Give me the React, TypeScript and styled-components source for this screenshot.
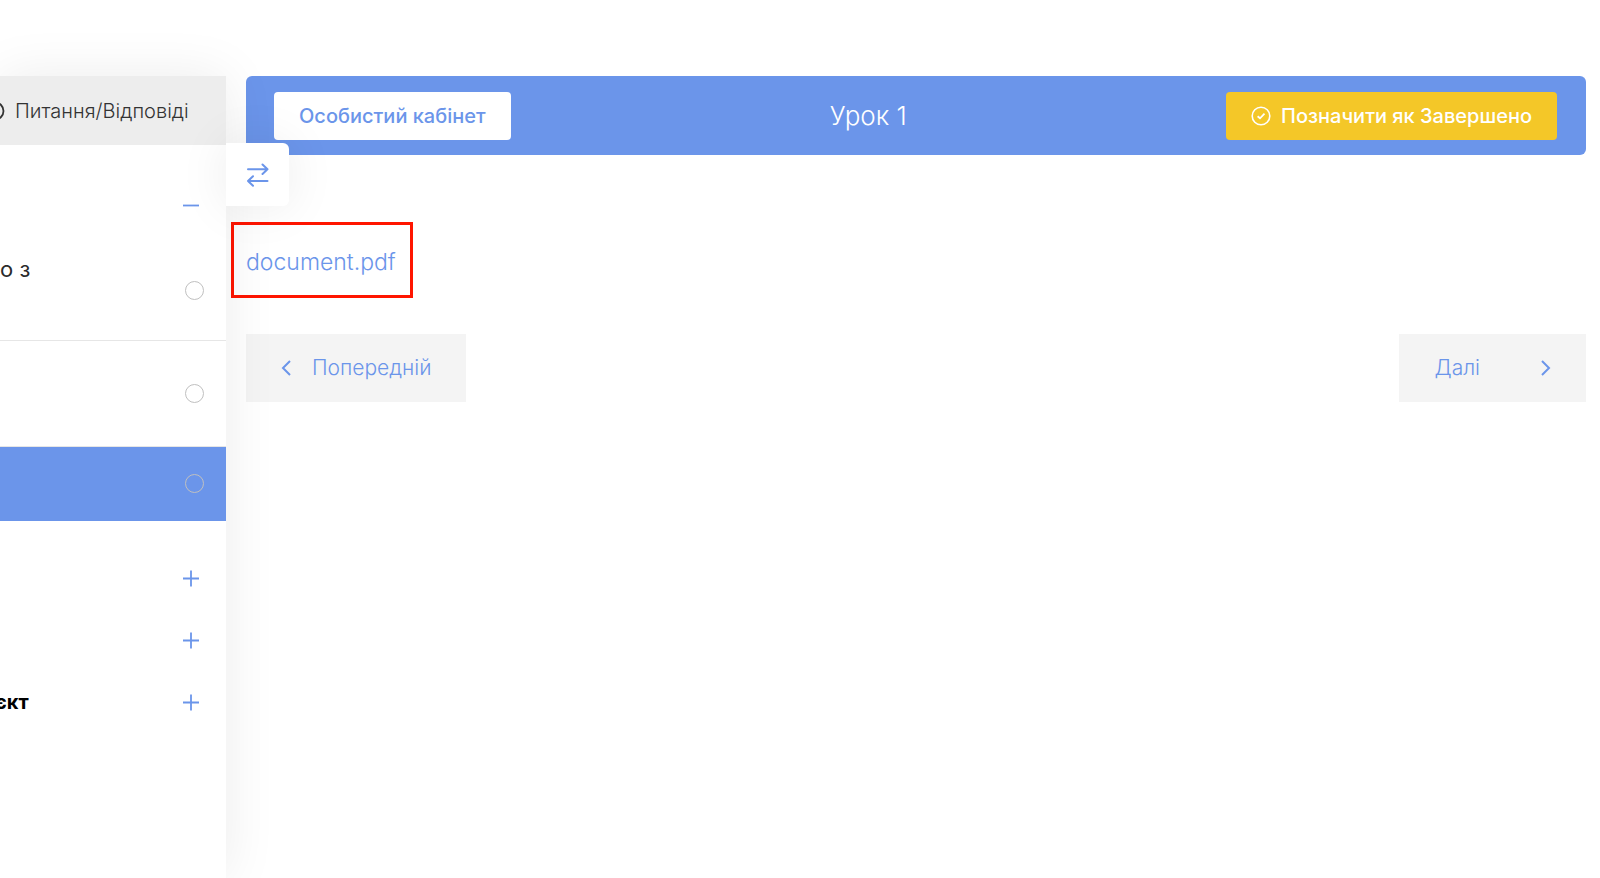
import React from "react";
import styled, { createGlobalStyle } from "styled-components";

const blue = "#6b95ea";

const GlobalStyle = createGlobalStyle`
  *, *::before, *::after { box-sizing: border-box; }
  body {
    margin: 0;
    background: #fff;
    color: #2b2b2b;
    font-family: Inter, "Noto Sans", "Liberation Sans", sans-serif;
    overflow-x: hidden;
  }
  button { font-family: inherit; border: 0; cursor: pointer; }
`;

const Page = styled.div`
  display: flex;
  align-items: stretch;
  min-height: 100vh;
  padding-top: 76px;
  overflow: hidden;
`;

const Sidebar = styled.aside`
  position: relative;
  z-index: 1;
  flex: 0 0 226px;
  background: #fff;
  box-shadow: 0 0 50px rgba(0, 0, 0, 0.08);
`;

const SidebarTab = styled.button`
  display: flex;
  align-items: center;
  gap: 10px;
  width: 100%;
  height: 69px;
  padding: 0 0 0 4px;
  background: #ededed;
  color: #333;
  font-size: 20px;
  font-weight: 300;
  line-height: 24px;
  white-space: nowrap;

  svg { flex: none; margin-left: -19px; }
`;

const SectionHead = styled.div<{ $open?: boolean }>`
  display: flex;
  align-items: center;
  justify-content: space-between;
  height: ${(p) => (p.$open ? 96 : 62)}px;
  padding: ${(p) => (p.$open ? "24px 25px 0 0" : "0 25px 0 0")};
`;

const SectionTitle = styled.h3`
  margin: 0 auto 0 -5px;
  color: #000;
  font-size: 20px;
  font-weight: 700;
  line-height: 24px;
`;

const FoldButton = styled.button`
  display: flex;
  margin-left: auto;
  padding: 0;
  background: none;
  color: ${blue};
`;

const LessonRow = styled.div<{ $height: number; $active?: boolean }>`
  display: flex;
  align-items: center;
  height: ${(p) => p.$height}px;
  padding-right: 22px;
  border-bottom: 1px solid ${(p) => (p.$active ? blue : "#e6e6e6")};
  background: ${(p) => (p.$active ? blue : "#fff")};
`;

const LessonLabel = styled.label`
  padding-bottom: 44px;
  font-size: 22px;
  line-height: 24px;
`;

const LessonCheck = styled.input`
  appearance: none;
  width: 19px;
  height: 19px;
  margin: 0 0 0 auto;
  border: 1px solid #c0c0c0;
  border-radius: 50%;
`;

const ClosedSections = styled.div`
  padding-top: 26px;
`;

const ToggleButton = styled.button`
  position: absolute;
  top: 67px;
  left: 100%;
  display: flex;
  align-items: center;
  justify-content: center;
  width: 63px;
  height: 63px;
  padding: 0;
  border-radius: 0 6px 6px 0;
  background: #fff;
  color: ${blue};
  box-shadow: 0 0 50px rgba(0, 0, 0, 0.08);
`;

const Main = styled.main`
  flex: 1;
  min-width: 0;
  padding: 0 14px 0 20px;
`;

const TopBar = styled.header`
  display: flex;
  align-items: center;
  justify-content: space-between;
  height: 79px;
  padding: 0 29px 0 28px;
  border-radius: 6px;
  background: ${blue};
`;

const Title = styled.h1`
  margin: 0;
  color: #fff;
  font-size: 26px;
  font-weight: 300;
  line-height: 32px;
`;

const BarButton = styled.button<{ $accent?: boolean }>`
  display: flex;
  align-items: center;
  gap: 10px;
  height: 48px;
  padding: 0 25px;
  border-radius: 4px;
  background: ${(p) => (p.$accent ? "#f4c728" : "#fff")};
  color: ${(p) => (p.$accent ? "#fff" : blue)};
  font-size: 20px;
  font-weight: 500;
  line-height: 24px;
  white-space: nowrap;
`;

const FileBox = styled.div`
  display: flex;
  width: fit-content;
  margin: 67px 0 36px -15px;
  padding: 24px 14px 20px 12px;
  border: 3px solid #ff1500;
`;

const FileLink = styled.a`
  color: ${blue};
  font-size: 23px;
  font-weight: 300;
  line-height: 26px;
  text-decoration: none;
`;

const Pager = styled.nav`
  display: flex;
  justify-content: space-between;
`;

const PagerLink = styled.a<{ $next?: boolean }>`
  display: flex;
  align-items: center;
  gap: ${(p) => (p.$next ? 60 : 20)}px;
  height: 68px;
  padding: 0 35px;
  background: #f4f4f4;
  color: ${blue};
  font-size: 21px;
  font-weight: 300;
  line-height: 28px;
  text-decoration: none;
`;

const QuestionIcon = () => (
  <svg width="20" height="20" viewBox="0 0 20 20" fill="none" stroke="currentColor" strokeWidth="1.8" aria-hidden="true">
    <circle cx="10" cy="10" r="8.5" />
  </svg>
);

const FoldIcon = ({ open }: { open?: boolean }) => (
  <svg width="20" height="20" viewBox="0 0 20 20" fill="none" stroke="currentColor" strokeWidth="1.8" aria-hidden="true">
    <path d={open ? "M2 10.5H18" : "M2 10.5H18M10 2.5V18.5"} />
  </svg>
);

const SwapIcon = () => (
  <svg width="22" height="24" viewBox="0 0 22 24" fill="none" stroke="currentColor" strokeWidth="2" strokeLinecap="round" strokeLinejoin="round" aria-hidden="true">
    <path d="M1 6.3H20.5M15.5 1.5L20.5 6.3L15.5 11" />
    <path d="M20.5 18H1M6 13.2L1 18L6 22.8" />
  </svg>
);

const CheckIcon = () => (
  <svg width="20" height="20" viewBox="0 0 20 20" fill="none" stroke="currentColor" strokeWidth="1.6" aria-hidden="true">
    <circle cx="10" cy="10" r="8.8" />
    <path d="M6.6 10.2L9 12.3L13.5 7.7" strokeWidth="1.8" />
  </svg>
);

const Chevron = ({ right }: { right?: boolean }) => (
  <svg width="11" height="18" viewBox="0 0 11 18" fill="none" stroke="currentColor" strokeWidth="2" aria-hidden="true">
    <path d={right ? "M2 2L9 9L2 16" : "M9 2L2 9L9 16"} />
  </svg>
);

const closedSections = ["", "", "єкт"];

export default function App() {
  return (
    <>
      <GlobalStyle />
      <Page>
        <Sidebar>
          <SidebarTab type="button">
            <QuestionIcon />
            Питання/Відповіді
          </SidebarTab>
          <SectionHead $open>
            <FoldButton type="button" aria-label="Згорнути" aria-expanded="true">
              <FoldIcon open />
            </FoldButton>
          </SectionHead>
          <LessonRow $height={100}>
            <LessonLabel htmlFor="lesson-1">о з</LessonLabel>
            <LessonCheck id="lesson-1" type="checkbox" />
          </LessonRow>
          <LessonRow $height={106}>
            <LessonCheck type="checkbox" aria-label="Урок завершено" />
          </LessonRow>
          <LessonRow $height={74} $active>
            <LessonCheck type="checkbox" aria-label="Урок 1 завершено" />
          </LessonRow>
          <ClosedSections>
            {closedSections.map((title, i) => (
              <SectionHead key={i}>
                {title && <SectionTitle>{title}</SectionTitle>}
                <FoldButton type="button" aria-label="Розгорнути" aria-expanded="false">
                  <FoldIcon />
                </FoldButton>
              </SectionHead>
            ))}
          </ClosedSections>
          <ToggleButton type="button" aria-label="Бічна панель">
            <SwapIcon />
          </ToggleButton>
        </Sidebar>
        <Main>
          <TopBar>
            <BarButton type="button">Особистий кабінет</BarButton>
            <Title>Урок 1</Title>
            <BarButton type="button" $accent>
              <CheckIcon />
              Позначити як Завершено
            </BarButton>
          </TopBar>
          <FileBox>
            <FileLink href="#document">document.pdf</FileLink>
          </FileBox>
          <Pager>
            <PagerLink href="#previous">
              <Chevron />
              Попередній
            </PagerLink>
            <PagerLink href="#next" $next>
              Далі
              <Chevron right />
            </PagerLink>
          </Pager>
        </Main>
      </Page>
    </>
  );
}
